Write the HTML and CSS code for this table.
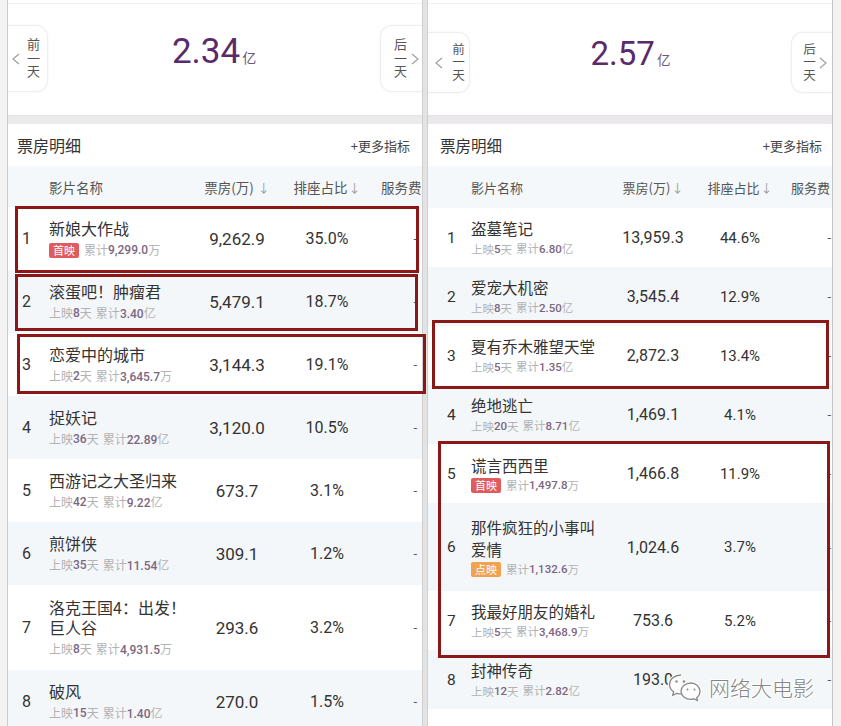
FILE: index.html
```html
<!DOCTYPE html>
<html lang="zh-CN">
<head>
<meta charset="utf-8">
<title>票房明细</title>
<link rel="stylesheet" href="styles.css">
</head>
<body>
<div class="shot">
  <section class="panel panel-a">
    <header class="summary">
      <div class="day prev">
        <svg class="chev" width="8" height="12" viewBox="0 0 8 12"><polyline points="7,1 1,6 7,11" fill="none" stroke="#a0a0a0" stroke-width="1.2"/></svg>
        <span class="vtext">前一天</span>
      </div>
      <div class="total"><span class="num">2.34</span><span class="unit">亿</span></div>
      <div class="day next">
        <span class="vtext">后一天</span>
        <svg class="chev" width="8" height="12" viewBox="0 0 8 12"><polyline points="1,1 7,6 1,11" fill="none" stroke="#a0a0a0" stroke-width="1.2"/></svg>
      </div>
    </header>
    <div class="band"></div>
    <div class="section-head"><span class="section-title">票房明细</span><span class="more">+更多指标</span></div>
    <div class="table">
      <div class="row head"><span></span><span class="c-name">影片名称</span><span class="c-mid">票房(万) <i class="down">↓</i></span><span class="c-mid">排座占比<i class="down">↓</i></span><span class="c-svc">服务费</span></div>
      <div class="row data"><span class="rank">1</span><div class="c-name"><div class="title">新娘大作战</div><div class="sub"><span class="tag tag-first">首映</span>累计<b>9,299.0</b>万</div></div><span class="c-mid bo">9,262.9</span><span class="c-mid pct">35.0%</span><span class="c-svc dash">-</span></div>
      <div class="row data"><span class="rank">2</span><div class="c-name"><div class="title">滚蛋吧！肿瘤君</div><div class="sub">上映<b>8</b>天<span class="acc">累计<b>3.40</b>亿</span></div></div><span class="c-mid bo">5,479.1</span><span class="c-mid pct">18.7%</span><span class="c-svc dash">-</span></div>
      <div class="row data"><span class="rank">3</span><div class="c-name"><div class="title">恋爱中的城市</div><div class="sub">上映<b>2</b>天<span class="acc">累计<b>3,645.7</b>万</span></div></div><span class="c-mid bo">3,144.3</span><span class="c-mid pct">19.1%</span><span class="c-svc dash">-</span></div>
      <div class="row data"><span class="rank">4</span><div class="c-name"><div class="title">捉妖记</div><div class="sub">上映<b>36</b>天<span class="acc">累计<b>22.89</b>亿</span></div></div><span class="c-mid bo">3,120.0</span><span class="c-mid pct">10.5%</span><span class="c-svc dash">-</span></div>
      <div class="row data"><span class="rank">5</span><div class="c-name"><div class="title">西游记之大圣归来</div><div class="sub">上映<b>42</b>天<span class="acc">累计<b>9.22</b>亿</span></div></div><span class="c-mid bo">673.7</span><span class="c-mid pct">3.1%</span><span class="c-svc dash">-</span></div>
      <div class="row data"><span class="rank">6</span><div class="c-name"><div class="title">煎饼侠</div><div class="sub">上映<b>35</b>天<span class="acc">累计<b>11.54</b>亿</span></div></div><span class="c-mid bo">309.1</span><span class="c-mid pct">1.2%</span><span class="c-svc dash">-</span></div>
      <div class="row data tall"><span class="rank">7</span><div class="c-name"><div class="title">洛克王国4：出发！巨人谷</div><div class="sub">上映<b>8</b>天<span class="acc">累计<b>4,931.5</b>万</span></div></div><span class="c-mid bo">293.6</span><span class="c-mid pct">3.2%</span><span class="c-svc dash">-</span></div>
      <div class="row data"><span class="rank">8</span><div class="c-name"><div class="title">破风</div><div class="sub">上映<b>15</b>天<span class="acc">累计<b>1.40</b>亿</span></div></div><span class="c-mid bo">270.0</span><span class="c-mid pct">1.5%</span><span class="c-svc dash">-</span></div>
    </div>
  </section>

  <div class="divider"></div>

  <section class="panel panel-b">
    <header class="summary">
      <div class="day prev">
        <svg class="chev" width="8" height="12" viewBox="0 0 8 12"><polyline points="7,1 1,6 7,11" fill="none" stroke="#a0a0a0" stroke-width="1.2"/></svg>
        <span class="vtext">前一天</span>
      </div>
      <div class="total"><span class="num">2.57</span><span class="unit">亿</span></div>
      <div class="day next">
        <span class="vtext">后一天</span>
        <svg class="chev" width="8" height="12" viewBox="0 0 8 12"><polyline points="1,1 7,6 1,11" fill="none" stroke="#a0a0a0" stroke-width="1.2"/></svg>
      </div>
    </header>
    <div class="band"></div>
    <div class="section-head"><span class="section-title">票房明细</span><span class="more">+更多指标</span></div>
    <div class="table">
      <div class="row head"><span></span><span class="c-name">影片名称</span><span class="c-mid">票房(万)<i class="down">↓</i></span><span class="c-mid">排座占比<i class="down">↓</i></span><span class="c-svc">服务费</span></div>
      <div class="row data"><span class="rank">1</span><div class="c-name"><div class="title">盗墓笔记</div><div class="sub">上映<b>5</b>天<span class="acc">累计<b>6.80</b>亿</span></div></div><span class="c-mid bo">13,959.3</span><span class="c-mid pct">44.6%</span><span class="c-svc dash">-</span></div>
      <div class="row data"><span class="rank">2</span><div class="c-name"><div class="title">爱宠大机密</div><div class="sub">上映<b>8</b>天<span class="acc">累计<b>2.50</b>亿</span></div></div><span class="c-mid bo">3,545.4</span><span class="c-mid pct">12.9%</span><span class="c-svc dash">-</span></div>
      <div class="row data"><span class="rank">3</span><div class="c-name"><div class="title">夏有乔木雅望天堂</div><div class="sub">上映<b>5</b>天<span class="acc">累计<b>1.35</b>亿</span></div></div><span class="c-mid bo">2,872.3</span><span class="c-mid pct">13.4%</span><span class="c-svc dash">-</span></div>
      <div class="row data"><span class="rank">4</span><div class="c-name"><div class="title">绝地逃亡</div><div class="sub">上映<b>20</b>天<span class="acc">累计<b>8.71</b>亿</span></div></div><span class="c-mid bo">1,469.1</span><span class="c-mid pct">4.1%</span><span class="c-svc dash">-</span></div>
      <div class="row data"><span class="rank">5</span><div class="c-name"><div class="title">谎言西西里</div><div class="sub"><span class="tag tag-first">首映</span>累计<b>1,497.8</b>万</div></div><span class="c-mid bo">1,466.8</span><span class="c-mid pct">11.9%</span><span class="c-svc dash">-</span></div>
      <div class="row data tall"><span class="rank">6</span><div class="c-name"><div class="title">那件疯狂的小事叫爱情</div><div class="sub"><span class="tag tag-pre">点映</span>累计<b>1,132.6</b>万</div></div><span class="c-mid bo">1,024.6</span><span class="c-mid pct">3.7%</span><span class="c-svc dash">-</span></div>
      <div class="row data"><span class="rank">7</span><div class="c-name"><div class="title">我最好朋友的婚礼</div><div class="sub">上映<b>5</b>天<span class="acc">累计<b>3,468.9</b>万</span></div></div><span class="c-mid bo">753.6</span><span class="c-mid pct">5.2%</span><span class="c-svc dash">-</span></div>
      <div class="row data"><span class="rank">8</span><div class="c-name"><div class="title">封神传奇</div><div class="sub">上映<b>12</b>天<span class="acc">累计<b>2.82</b>亿</span></div></div><span class="c-mid bo">193.0</span><span class="c-mid pct"></span><span class="c-svc dash">-</span></div>
      <div class="row data"><span class="rank"></span><div class="c-name"></div><span></span><span></span><span></span></div>
    </div>
  </section>

  <div class="mark mark-l1"></div>
  <div class="mark mark-l2"></div>
  <div class="mark mark-l3"></div>
  <div class="mark mark-r1"></div>
  <div class="mark mark-r2"></div>

  <div class="watermark">
    <svg class="wm-icon" width="36" height="30" viewBox="0 0 36 30">
      <g fill="rgba(255,255,255,0.85)" stroke="#fff" stroke-width="3.5" stroke-linejoin="round">
        <path d="M14 3C7.5 3 2.5 7.3 2.5 12.5c0 3 1.6 5.6 4.2 7.4l-1.2 3.6 4.3-2.2c1.4.4 2.8.6 4.2.6"/>
        <path d="M24 11c-5.8 0-10 3.7-10 8.2s4.2 8.2 10 8.2c1.1 0 2.2-.2 3.2-.5l3.4 1.8-.9-3c2-1.5 3.3-3.9 3.3-6.5 0-4.5-4.2-8.2-9-8.2z"/>
      </g>
      <g fill="none" stroke="#8a8a8a" stroke-width="1.3" stroke-linejoin="round">
        <path d="M14 3C7.5 3 2.5 7.3 2.5 12.5c0 3 1.6 5.6 4.2 7.4l-1.2 3.6 4.3-2.2c1.4.4 2.8.6 4.2.6"/>
        <path d="M24 11c-5.8 0-10 3.7-10 8.2s4.2 8.2 10 8.2c1.1 0 2.2-.2 3.2-.5l3.4 1.8-.9-3c2-1.5 3.3-3.9 3.3-6.5 0-4.5-4.2-8.2-9-8.2z"/>
      </g>
      <g fill="#8a8a8a">
        <circle cx="9.5" cy="9.5" r="1.2"/>
        <circle cx="17" cy="9.5" r="1.2"/>
        <circle cx="20.5" cy="17.5" r="1"/>
        <circle cx="27.5" cy="17.5" r="1"/>
      </g>
    </svg>
    <span class="wm-text">网络大电影</span>
  </div>
</div>
</body>
</html>
```

FILE: styles.css
```css
* {
  box-sizing: border-box;
  margin: 0;
  padding: 0;
}

body {
  margin: 0;
  width: 841px;
  height: 726px;
  overflow: hidden;
  background: #f3f3f3;
  font-family: Roboto, "Noto Sans CJK SC", sans-serif;
  color: #333;
}

.shot {
  position: relative;
  display: flex;
  width: 841px;
  height: 726px;
  padding-left: 7px;
  overflow: hidden;
}

.panel {
  flex: none;
  height: 726px;
  background: #fff;
  overflow: hidden;
}

.panel-a {
  width: 416px;
  border-left: 1px solid #cbcbcb;
  border-right: 1px solid #cfcfcf;
}

.divider {
  flex: none;
  width: 4px;
  background: #e3e3e3;
}

.panel-b {
  width: 406px;
  border-left: 1px solid #cfcfcf;
  border-right: 1px solid #c4c4c4;
}

/* ---------- summary ---------- */
.summary {
  display: flex;
  align-items: flex-start;
  height: 112px;
  margin-top: 3px;
  border-top: 1px solid #f1f1f1;
}

.panel-a .summary { padding-top: 21px; }
.panel-b .summary { padding-top: 28px; }

.day {
  flex: none;
  display: flex;
  align-items: center;
  background: #fff;
  border: 1px solid #eeeeee;
  box-shadow: 0 0 3px rgba(0, 0, 0, 0.05);
  color: #555;
}

.panel-a .day { height: 67px; }
.panel-b .day { height: 61px; }

.prev {
  border-left: none;
  border-radius: 0 12px 12px 0;
}

.next {
  border-right: none;
  border-radius: 12px 0 0 12px;
}

.panel-a .prev { width: 40px; padding-left: 4px; gap: 6px; }
.panel-a .next { width: 42px; padding-left: 12px; gap: 4px; }
.panel-b .prev { width: 42px; padding-left: 7px; gap: 9px; }
.panel-b .next { width: 41px; padding-left: 11px; gap: 3px; }

.chev { flex: none; }

.vtext {
  writing-mode: vertical-rl;
  text-orientation: upright;
  font-family: "Noto Sans CJK SC", sans-serif;
  font-size: 13px;
  line-height: 14px;
  letter-spacing: 0.5px;
  color: #555;
}

.panel-b .vtext {
  font-size: 12.5px;
  line-height: 13px;
  letter-spacing: 0.5px;
}

.total {
  flex: 1;
  text-align: center;
  white-space: nowrap;
}

.num {
  color: #5a2a6b;
  font-weight: 400;
}

.unit {
  font-family: "Noto Sans CJK SC", sans-serif;
  color: #6d5876;
  margin-left: 2px;
}

.panel-a .total { margin-top: 9px; line-height: 35px; }
.panel-a .num { font-size: 35px; }
.panel-a .unit { font-size: 14px; }

.panel-b .total { margin-top: 5px; line-height: 33px; }
.panel-b .num { font-size: 33px; }
.panel-b .unit { font-size: 13.5px; }

.band {
  height: 9px;
  background: #ebebeb;
  box-shadow: inset 0 1px 2px rgba(0, 0, 0, 0.03);
}

.panel-b .band { background: #ece9ec; }

/* ---------- section head ---------- */
.section-head {
  display: flex;
  justify-content: space-between;
  align-items: center;
  height: 42px;
  font-family: "Noto Sans CJK SC", sans-serif;
}

.panel-a .section-head { padding: 0 12px 0 9px; }
.panel-b .section-head { padding: 0 10px 0 12px; }

.section-title {
  font-size: 16px;
  color: #333;
}

.panel-b .section-title { font-size: 15.5px; }

.more {
  font-size: 13px;
  color: #444;
}

/* ---------- table ---------- */
.row {
  display: grid;
  align-items: center;
}

.panel-a .row { grid-template-columns: 41px 152px 72px 108px 41px; }
.panel-b .row { grid-template-columns: 43px 146px 72px 102px 41px; }

.row.head {
  height: 41px;
  background: #f4f8fa;
  font-family: "Noto Sans CJK SC", sans-serif;
  font-size: 13.5px;
  color: #555;
  white-space: nowrap;
}

.panel-b .row.head {
  height: 42px;
  font-size: 13px;
}

.down {
  font-style: normal;
  color: #999;
  font-size: 12px;
  margin-left: 1px;
}

.c-mid {
  text-align: center;
  white-space: nowrap;
}

.c-svc {
  white-space: nowrap;
  overflow: hidden;
}

.row.data:nth-child(odd) {
  background: #f3f7f9;
}

.panel-a .row.data { height: 63px; }
.panel-a .row.data.tall { height: 85px; }
.panel-b .row.data { height: 59px; }
.panel-b .row.data.tall { height: 88px; }

.rank {
  font-size: 16px;
  color: #333;
}

.panel-a .rank { padding-left: 14px; }
.panel-b .rank { padding-left: 19px; font-size: 15.5px; }

.panel-a .c-name { padding-right: 6px; }
.panel-b .c-name { padding-right: 14px; }

.title {
  font-family: "Noto Sans CJK SC", sans-serif;
  color: #333;
}

.panel-a .title { font-size: 16px; line-height: 20px; margin-bottom: 3px; }
.panel-b .title { font-size: 15.5px; line-height: 22px; margin-bottom: 1px; }

.sub {
  display: flex;
  align-items: center;
  white-space: nowrap;
  font-family: "Noto Sans CJK SC", sans-serif;
  color: #b3b3b3;
}

.panel-a .sub { font-size: 12px; line-height: 18px; }
.panel-b .sub { font-size: 11.5px; line-height: 17px; }

.sub b {
  font-family: Roboto, sans-serif;
  font-weight: 500;
  color: #7c6682;
}

.acc { margin-left: 4px; }

.tag {
  display: inline-block;
  height: 15px;
  line-height: 15px;
  padding: 0 4px;
  margin-right: 5px;
  border-radius: 2px;
  font-size: 11px;
  color: #fff;
}

.tag-first { background: #e05b5c; }
.tag-pre { background: #f0a250; }

.bo {
  color: #333;
}

.panel-a .bo { font-size: 17px; }
.panel-a .pct { font-size: 16px; color: #333; }
.panel-b .bo { font-size: 16px; }
.panel-b .pct { font-size: 15px; color: #333; }

.dash {
  text-align: right;
  font-size: 13px;
  color: #555;
}

.panel-a .dash { padding-right: 5px; }
.panel-b .dash { padding-right: 1px; }

/* ---------- annotation boxes ---------- */
.mark {
  position: absolute;
  border: 3px solid #8c1717;
  pointer-events: none;
}

.mark-l1 { left: 15px; top: 206px; width: 404px; height: 67px; }
.mark-l2 { left: 15px; top: 274px; width: 403px; height: 57px; }
.mark-l3 { left: 17px; top: 334px; width: 409px; height: 60px; }
.mark-r1 { left: 432px; top: 320px; width: 397px; height: 69px; }
.mark-r2 { left: 438px; top: 441px; width: 392px; height: 217px; }

/* ---------- watermark ---------- */
.watermark {
  position: absolute;
  left: 667px;
  top: 672px;
  display: flex;
  align-items: center;
  gap: 6px;
}

.wm-text {
  font-family: "Noto Sans CJK SC", sans-serif;
  font-size: 21px;
  font-weight: 300;
  line-height: 26px;
  color: #858585;
  text-shadow: 0 0 2px #fff, 0 0 2px #fff, 1px 1px 0 #fff, -1px -1px 0 #fff, 1px -1px 0 #fff, -1px 1px 0 #fff;
}
```
